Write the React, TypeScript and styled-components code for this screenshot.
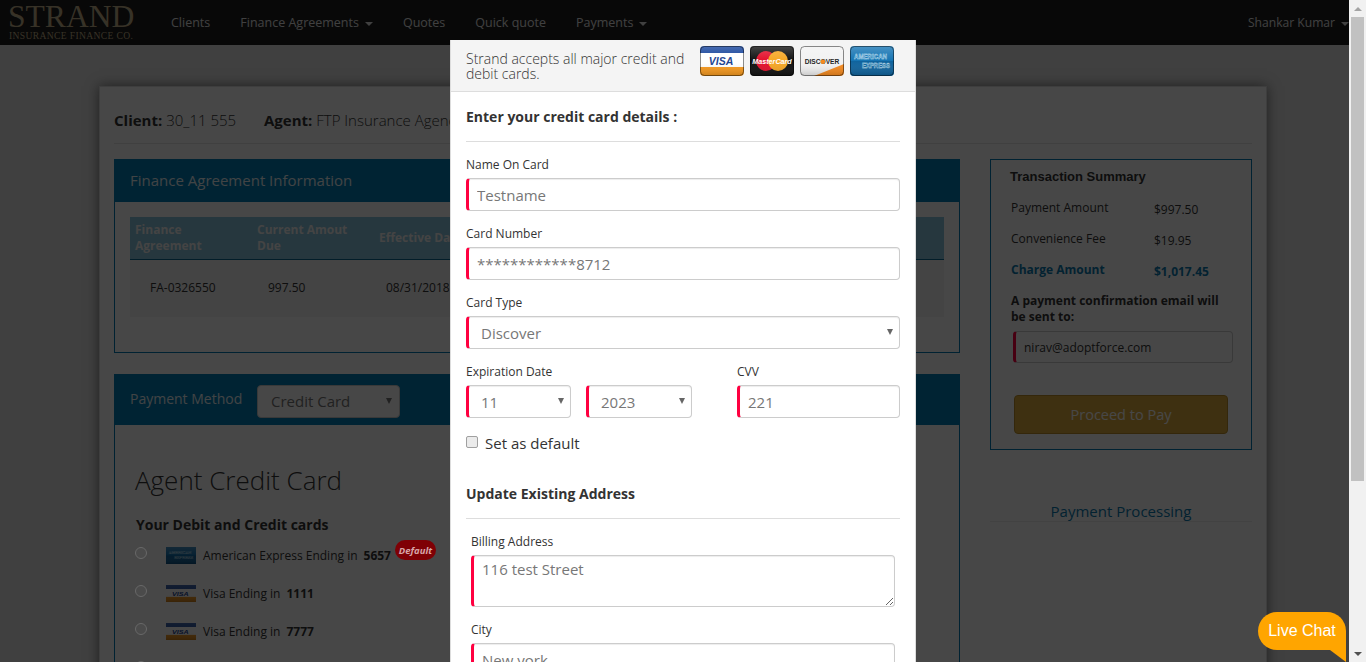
import React from 'react';
import styled, { createGlobalStyle } from 'styled-components';

const GlobalStyle = createGlobalStyle`
  html, body { margin: 0; padding: 0; height: 100%; overflow: hidden; }
  body { font-family: "Open Sans", "Liberation Sans", sans-serif; color: #333; }
  #root { height: 100%; }
  * { box-sizing: border-box; }
`;

const Shell = styled.div`
  display: flex;
  width: 1366px;
  height: 662px;
  overflow: hidden;
`;

const Viewport = styled.div`
  position: relative;
  width: 1349px;
  height: 662px;
  overflow: hidden;
  background: #e4e4e4;
`;

/* ---------- fake window scrollbar ---------- */
const ScrollBar = styled.div`
  width: 17px;
  height: 662px;
  background: #f1f1f1;
  display: flex;
  flex-direction: column;
  align-items: center;
`;

const ScrollArrow = styled.div<{ $down?: boolean }>`
  width: 17px;
  height: 17px;
  flex: none;
  display: flex;
  align-items: center;
  justify-content: center;
  margin-top: ${p => (p.$down ? 'auto' : '0')};
  &::before {
    content: '';
    border-left: 4px solid transparent;
    border-right: 4px solid transparent;
    ${p => (p.$down ? 'border-top: 4px solid #505050;' : 'border-bottom: 4px solid #a3a3a3;')}
  }
`;

const ScrollThumb = styled.div`
  width: 13px;
  height: 464px;
  background: #c1c1c1;
  flex: none;
`;

/* ---------- navbar ---------- */
const Navbar = styled.div`
  height: 45px;
  background: #1d1d1d;
  display: flex;
  align-items: center;
  padding-left: 8px;
`;

const Logo = styled.div`
  width: 148px;
  font-family: "Liberation Serif", serif;
  color: #c4b28c;
  display: flex;
  flex-direction: column;
`;

const LogoMark = styled.div`
  font-size: 31.6px;
  line-height: 24px;
`;

const LogoSub = styled.div`
  font-size: 9.6px;
  line-height: 10px;
  letter-spacing: 0.35px;
  margin: 2px 0 0 1px;
`;

const NavItem = styled.div`
  padding: 0 15px;
  font-size: 12.5px;
  color: #e6e6e6;
  display: flex;
  align-items: center;
  white-space: nowrap;
`;

const Caret = styled.span`
  display: inline-block;
  margin-left: 6px;
  margin-top: 2px;
  border-top: 4px solid #e6e6e6;
  border-left: 4px solid transparent;
  border-right: 4px solid transparent;
`;

const NavRight = styled(NavItem)`
  margin-left: auto;
  padding: 0;
  font-size: 12.1px;
`;

/* ---------- page behind the modal ---------- */
const Card = styled.div`
  margin: 41px 0 0 99px;
  width: 1168px;
  height: 640px;
  background: #fff;
  border: 1px solid #ddd;
  box-shadow: 0 0 12px rgba(0, 0, 0, 0.5);
  padding: 0 14px;
`;

const ClientRow = styled.div`
  height: 57px;
  border-bottom: 1px solid #e6e6e6;
  display: flex;
  align-items: center;
  padding-top: 10px;
  font-size: 15px;
  font-weight: 300;
  white-space: nowrap;
  b { font-weight: 700; }
`;

const ClientPart = styled.span`
  width: 150px;
`;

const Columns = styled.div`
  display: grid;
  grid-template-columns: 846px 262px;
  column-gap: 30px;
  padding-top: 15px;
`;

const Panel = styled.div<{ $grow?: boolean }>`
  border: 1px solid #007bb5;
  border-top: none;
  margin-bottom: 21px;
  ${p => (p.$grow ? 'height: 400px;' : 'height: 194px;')}
`;

const PanelHead = styled.div<{ $tall?: boolean }>`
  height: ${p => (p.$tall ? '51px' : '43px')};
  margin: 0 -1px;
  background: #007fb6;
  color: #e8f2f6;
  font-size: 15px;
  padding: 0 0 ${p => (p.$tall ? '0' : '2px')} 16px;
  display: flex;
  align-items: center;
`;

const PayLabel = styled.span`
  font-size: 14px;
  width: 127px;
  margin-top: -3px;
`;

const PaySelect = styled.div`
  width: 143px;
  height: 33px;
  margin-top: 4px;
  padding: 0 0 2px 13px;
  background: #fff;
  border: 1px solid #ccc;
  border-radius: 4px;
  font-size: 15px;
  color: #777;
  display: flex;
  align-items: center;
  position: relative;
  &::after {
    content: '';
    position: absolute;
    right: 7px;
    top: 12px;
    border-top: 6px solid #777;
    border-left: 3px solid transparent;
    border-right: 3px solid transparent;
  }
`;

const Table = styled.div`
  margin: 15px 15px 0;
`;

const TableHead = styled.div`
  height: 43px;
  background: #88c4dd;
  border-bottom: 1px solid #0a6a94;
  display: grid;
  grid-template-columns: repeat(6, 122px);
  align-items: center;
  font-size: 12px;
  line-height: 16px;
  font-weight: 700;
  color: #f2f2f2;
`;

const HeadCell = styled.div`
  padding: 0 12px 0 5px;
`;

const TableRow = styled.div`
  height: 57px;
  padding-bottom: 2px;
  background: #f3f3f3;
  display: grid;
  grid-template-columns: repeat(6, 122px);
  align-items: center;
  font-size: 12px;
`;

const RowCell = styled.div<{ $indent: number }>`
  padding-left: ${p => p.$indent}px;
`;

const SectionTitle = styled.div`
  font-size: 26px;
  font-weight: 300;
  line-height: 36px;
  margin: 37px 0 0 20px;
`;

const CardsTitle = styled.div`
  font-size: 14px;
  font-weight: 700;
  line-height: 19px;
  margin: 17px 0 0 21px;
`;

const CardList = styled.div`
  margin: 2px 0 0 20px;
`;

const CardRow = styled.div`
  height: 38px;
  display: flex;
  align-items: center;
  font-size: 12px;
  white-space: nowrap;
  b { font-weight: 700; margin-left: 6px; }
`;

/* radios stay light on the dimmed page in the reference, so they sit above the backdrop */
const Radio = styled.input.attrs({ type: 'radio' })`
  appearance: none;
  position: relative;
  z-index: 11;
  width: 12px;
  height: 12px;
  margin: -5px 19px 0 0;
  flex: none;
  border-radius: 50%;
  background: #4b4b4b;
  border: 1px solid #686868;
`;

const RowLogo = styled.span`
  width: 30px;
  height: 17px;
  margin-right: 7px;
  display: flex;
  svg { display: block; }
`;

/* the badge sits above the backdrop in the reference, it keeps its strong red */
const DefaultBadge = styled.span`
  position: relative;
  z-index: 11;
  width: 41px;
  height: 20px;
  margin: -10px 0 0 4px;
  border-radius: 10px;
  background: #7f0005;
  color: #d8a5a8;
  font-size: 9.5px;
  font-weight: 700;
  font-style: italic;
  display: flex;
  align-items: center;
  justify-content: center;
`;

const Summary = styled.div`
  height: 291px;
  border: 1px solid #007bb5;
  padding: 8px 19px 0 20px;
`;

const SummaryTitle = styled.div`
  font-family: "Liberation Sans", sans-serif;
  font-size: 13px;
  font-weight: 700;
  line-height: 18px;
  margin: 0 0 6px -1px;
`;

const SummaryRow = styled.div<{ $accent?: boolean }>`
  display: grid;
  grid-template-columns: 143px 1fr;
  height: 31px;
  font-size: 12px;
  line-height: 16px;
  padding-top: 8px;
  color: ${p => (p.$accent ? '#0b7bb0' : '#333')};
  font-weight: ${p => (p.$accent ? 700 : 400)};
`;

const SummaryValue = styled.span`
  margin-top: 2px;
`;

const EmailNote = styled.div`
  font-size: 12px;
  font-weight: 700;
  line-height: 16px;
  margin-top: 8px;
`;

const EmailBox = styled.div`
  width: 220px;
  height: 32px;
  margin: 6px 0 0 2px;
  border: 1px solid #ccc;
  border-left: 3px solid #ff0040;
  border-radius: 4px;
  font-size: 12px;
  display: flex;
  align-items: center;
  padding-left: 8px;
`;

const ProceedButton = styled.div`
  width: 214px;
  height: 39px;
  margin: 32px 0 0 3px;
  background: #dfae3f;
  border: 1px solid #b98d2a;
  border-radius: 4px;
  color: #fff;
  font-size: 14.5px;
  display: flex;
  align-items: center;
  justify-content: center;
`;

const Processing = styled.div`
  height: 26px;
  margin-top: 46px;
  border-bottom: 1px solid #eee;
  text-align: center;
  font-size: 15px;
  line-height: 30px;
  color: #0b7bb0;
`;

/* ---------- overlay ---------- */
const Backdrop = styled.div`
  position: absolute;
  inset: 0;
  background: rgba(0, 0, 0, 0.72);
  z-index: 10;
`;

const Modal = styled.div`
  position: absolute;
  z-index: 12;
  left: 450px;
  top: 40px;
  width: 466px;
  height: 640px;
  background: #fff;
  border-left: 1px solid #ddd;
  border-right: 1px solid #ddd;
`;

const ModalHead = styled.div`
  height: 52px;
  background: #f4f4f4;
  border-bottom: 1px solid #ddd;
  display: flex;
  align-items: center;
  padding: 0 21px 0 15px;
`;

const ModalIntro = styled.div`
  width: 234px;
  margin-top: 1px;
  font-size: 14px;
  font-weight: 300;
  line-height: 15px;
  color: #333;
`;

const CardLogos = styled.div`
  display: flex;
  gap: 6px;
  margin-top: -9px;
  svg { display: block; }
`;

const ModalBody = styled.div`
  padding: 0 15px;
`;

const FormTitle = styled.div`
  height: 50px;
  border-bottom: 1px solid #ddd;
  font-size: 14px;
  font-weight: 700;
  line-height: 19px;
  padding-top: 15px;
`;

const FormTitleWide = styled(FormTitle)`
  margin-top: 15px;
`;

const Label = styled.label`
  display: block;
  font-size: 12px;
  line-height: 17px;
  height: 17px;
  margin-bottom: 5px;
`;

const Field = styled.div<{ $inset?: boolean }>`
  margin: 14px ${p => (p.$inset ? '5px' : '0')} 0;
`;

const TextInput = styled.input`
  display: block;
  width: 100%;
  height: 33px;
  border: 1px solid #ccc;
  border-left: 3px solid #ff0040;
  border-radius: 4px;
  padding: 0 8px;
  font: 400 15px "Open Sans", sans-serif;
  color: #777;
  background: #fff;
  box-shadow: inset 0 1px 1px rgba(0, 0, 0, 0.075);
  outline: none;
`;

const AddressArea = styled.textarea`
  display: block;
  width: 100%;
  height: 52px;
  border: 1px solid #ccc;
  border-left: 3px solid #ff0040;
  border-radius: 4px;
  padding: 3px 8px;
  font: 400 15px/20px "Open Sans", sans-serif;
  color: #777;
  box-shadow: inset 0 1px 1px rgba(0, 0, 0, 0.075);
  outline: none;
`;

const SelectBox = styled.div<{ $width?: number }>`
  position: relative;
  width: ${p => (p.$width ? `${p.$width}px` : '100%')};
  height: 33px;
  border: 1px solid #ccc;
  border-left: 3px solid #ff0040;
  border-radius: 4px;
  font-size: 15px;
  color: #777;
  display: flex;
  align-items: center;
  padding-left: 12px;
  box-shadow: inset 0 1px 1px rgba(0, 0, 0, 0.075);
  &::after {
    content: '';
    position: absolute;
    right: 6px;
    top: 12px;
    border-top: 6px solid #666;
    border-left: 3px solid transparent;
    border-right: 3px solid transparent;
  }
`;

const ExpiryRow = styled.div`
  display: flex;
`;

const ExpiryPart = styled.div`
  width: 271px;
`;

const ExpirySelects = styled.div`
  display: flex;
  gap: 15px;
`;

const CvvPart = styled.div`
  width: 163px;
`;

const DefaultRow = styled.label`
  display: flex;
  align-items: center;
  margin-top: 15px;
  height: 21px;
  font-size: 15px;
  line-height: 21px;
`;

const Checkbox = styled.input.attrs({ type: 'checkbox' })`
  appearance: none;
  width: 12px;
  height: 12px;
  margin: -4px 7px 0 0;
  background: #ebebeb;
  border: 1px solid #a0a0a0;
  border-radius: 2px;
`;

const ChatBubble = styled.div`
  position: absolute;
  z-index: 13;
  left: 1258px;
  top: 612px;
  width: 88px;
  height: 38px;
  background: #ffa500;
  border-radius: 19px 19px 0 19px;
  color: #fff;
  font: 400 16px/38px "Liberation Sans", sans-serif;
  text-align: center;
  &::after {
    content: '';
    position: absolute;
    right: 0;
    top: 38px;
    border-top: 12px solid #ffa500;
    border-left: 16px solid transparent;
  }
`;

type CardKind = 'visa' | 'mc' | 'discover' | 'amex';

// drawn on a 44x30 canvas, stretched down for the small list icons
const CardLogo = ({ kind, width, height, flat }: { kind: CardKind; width: number; height: number; flat?: boolean }) => {
  const r = flat ? 0 : 4;
  return (
    <svg width={width} height={height} viewBox="0 0 44 30" preserveAspectRatio="none">
      <defs>
        <clipPath id={`clip-${kind}-${width}`}>
          <rect x="0" y="0" width="44" height="30" rx={r} />
        </clipPath>
        <linearGradient id={`gloss-${kind}-${width}`} x1="0" y1="0" x2="0" y2="1">
          <stop offset="0" stopColor="#fff" stopOpacity="0.22" />
          <stop offset="0.5" stopColor="#fff" stopOpacity="0" />
          <stop offset="1" stopColor="#000" stopOpacity="0.18" />
        </linearGradient>
      </defs>
      <g clipPath={`url(#clip-${kind}-${width})`}>
        {kind === 'visa' && (
          <>
            <rect width="44" height="30" fill="#fff" />
            <rect width="44" height="7" fill="#15439b" />
            <rect y="21" width="44" height="9" fill="#f79a1f" />
            <text x="21" y="18.8" textAnchor="middle" fontFamily="Liberation Sans" fontSize="10.5" fontWeight="700" fontStyle="italic" fill="#1a3f8f">VISA</text>
          </>
        )}
        {kind === 'mc' && (
          <>
            <rect width="44" height="30" fill="#111" />
            <circle cx="16" cy="15" r="10" fill="#e3102c" />
            <circle cx="28" cy="15" r="10" fill="#f6a623" />
            <text x="22" y="17.6" textAnchor="middle" fontFamily="Liberation Sans" fontSize="7.2" fontWeight="700" fontStyle="italic" fill="#fff">MasterCard</text>
          </>
        )}
        {kind === 'discover' && (
          <>
            <rect width="44" height="30" fill="#f2f2f2" />
            <path d="M14 30 L44 18 V30 Z" fill="#f58a1f" />
            <text x="22" y="18" textAnchor="middle" fontFamily="Liberation Sans" fontSize="6.6" fontWeight="700" fill="#222">DISCOVER</text>
            <circle cx="23" cy="15.7" r="2.3" fill="#f58a1f" />
          </>
        )}
        {kind === 'amex' && (
          <>
            <rect width="44" height="30" fill="#1574b3" />
            <rect y="15" width="44" height="15" fill="#0f639d" />
            <text x="4" y="13" textLength="33" lengthAdjust="spacingAndGlyphs" fontFamily="Liberation Sans" fontSize="7" fontWeight="700" fill="none" stroke="#dff0fa" strokeWidth="0.35">AMERICAN</text>
            <text x="12" y="21.5" textLength="28" lengthAdjust="spacingAndGlyphs" fontFamily="Liberation Sans" fontSize="7" fontWeight="700" fill="none" stroke="#dff0fa" strokeWidth="0.35">EXPRESS</text>
          </>
        )}
        <rect width="44" height="30" fill={`url(#gloss-${kind}-${width})`} />
      </g>
      {!flat && <rect x="0.5" y="0.5" width="43" height="29" rx={r} fill="none" stroke="rgba(0,0,0,0.45)" />}
    </svg>
  );
};

const tableHeads = ['Finance Agreement', 'Current Amout Due', 'Effective Date'];

const summaryRows = [
  { label: 'Payment Amount', value: '$997.50' },
  { label: 'Convenience Fee', value: '$19.95' },
  { label: 'Charge Amount', value: '$1,017.45', accent: true },
];

const savedCards: { kind: CardKind; name: string; last: string; isDefault?: boolean }[] = [
  { kind: 'amex', name: 'American Express Ending in', last: '5657', isDefault: true },
  { kind: 'visa', name: 'Visa Ending in', last: '1111' },
  { kind: 'visa', name: 'Visa Ending in', last: '7777' },
];

export default function App() {
  return (
    <Shell>
      <GlobalStyle />
      <Viewport>
        <Navbar>
          <Logo>
            <LogoMark>STRAND</LogoMark>
            <LogoSub>INSURANCE FINANCE CO.</LogoSub>
          </Logo>
          <NavItem>Clients</NavItem>
          <NavItem>Finance Agreements<Caret /></NavItem>
          <NavItem>Quotes</NavItem>
          <NavItem>Quick quote</NavItem>
          <NavItem>Payments<Caret /></NavItem>
          <NavRight>Shankar Kumar<Caret /></NavRight>
        </Navbar>

        <Card>
          <ClientRow>
            <ClientPart><b>Client:</b> 30_11 555</ClientPart>
            <span><b>Agent:</b> FTP Insurance Agency</span>
          </ClientRow>
          <Columns>
            <div>
              <Panel>
                <PanelHead>Finance Agreement Information</PanelHead>
                <Table>
                  <TableHead>
                    {tableHeads.map(h => <HeadCell key={h}>{h}</HeadCell>)}
                  </TableHead>
                  <TableRow>
                    <RowCell $indent={20}>FA-0326550</RowCell>
                    <RowCell $indent={16}>997.50</RowCell>
                    <RowCell $indent={12}>08/31/2018</RowCell>
                  </TableRow>
                </Table>
              </Panel>
              <Panel $grow>
                <PanelHead $tall>
                  <PayLabel>Payment Method</PayLabel>
                  <PaySelect>Credit Card</PaySelect>
                </PanelHead>
                <SectionTitle>Agent Credit Card</SectionTitle>
                <CardsTitle>Your Debit and Credit cards</CardsTitle>
                <CardList>
                  {savedCards.map(c => (
                    <CardRow key={c.last}>
                      <Radio name="saved-card" />
                      <RowLogo><CardLogo kind={c.kind} width={30} height={17} flat /></RowLogo>
                      {c.name}
                      <b>{c.last}</b>
                      {c.isDefault && <DefaultBadge>Default</DefaultBadge>}
                    </CardRow>
                  ))}
                  <CardRow><Radio name="saved-card" /></CardRow>
                </CardList>
              </Panel>
            </div>
            <div>
              <Summary>
                <SummaryTitle>Transaction Summary</SummaryTitle>
                {summaryRows.map(r => (
                  <SummaryRow key={r.label} $accent={r.accent}>
                    <span>{r.label}</span>
                    <SummaryValue>{r.value}</SummaryValue>
                  </SummaryRow>
                ))}
                <EmailNote>A payment confirmation email will be sent to:</EmailNote>
                <EmailBox>nirav@adoptforce.com</EmailBox>
                <ProceedButton>Proceed to Pay</ProceedButton>
              </Summary>
              <Processing>Payment Processing</Processing>
            </div>
          </Columns>
        </Card>

        <Backdrop />

        <Modal>
          <ModalHead>
            <ModalIntro>Strand accepts all major credit and debit cards.</ModalIntro>
            <CardLogos>
              <CardLogo kind="visa" width={44} height={30} />
              <CardLogo kind="mc" width={44} height={30} />
              <CardLogo kind="discover" width={44} height={30} />
              <CardLogo kind="amex" width={44} height={30} />
            </CardLogos>
          </ModalHead>
          <ModalBody>
            <FormTitle>Enter your credit card details :</FormTitle>
            <Field>
              <Label>Name On Card</Label>
              <TextInput readOnly value="Testname" />
            </Field>
            <Field>
              <Label>Card Number</Label>
              <TextInput readOnly value="************8712" />
            </Field>
            <Field>
              <Label>Card Type</Label>
              <SelectBox>Discover</SelectBox>
            </Field>
            <Field>
              <ExpiryRow>
                <ExpiryPart>
                  <Label>Expiration Date</Label>
                  <ExpirySelects>
                    <SelectBox $width={105}>11</SelectBox>
                    <SelectBox $width={106}>2023</SelectBox>
                  </ExpirySelects>
                </ExpiryPart>
                <CvvPart>
                  <Label>CVV</Label>
                  <TextInput readOnly value="221" />
                </CvvPart>
              </ExpiryRow>
            </Field>
            <DefaultRow>
              <Checkbox />
              Set as default
            </DefaultRow>
            <FormTitleWide>Update Existing Address</FormTitleWide>
            <Field $inset>
              <Label>Billing Address</Label>
              <AddressArea readOnly value="116 test Street" />
            </Field>
            <Field $inset>
              <Label>City</Label>
              <TextInput readOnly value="New york" />
            </Field>
          </ModalBody>
        </Modal>

        <ChatBubble>Live Chat</ChatBubble>
      </Viewport>
      <ScrollBar>
        <ScrollArrow />
        <ScrollThumb />
        <ScrollArrow $down />
      </ScrollBar>
    </Shell>
  );
}
